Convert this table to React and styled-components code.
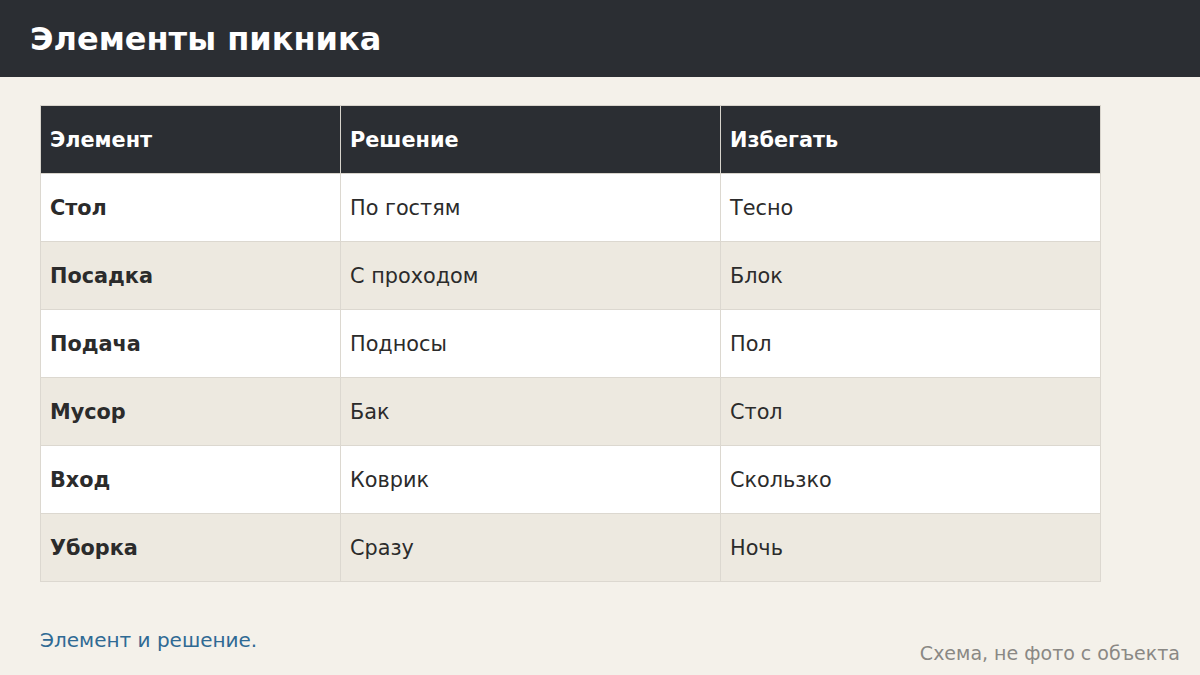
import React from "react";
import styled, { createGlobalStyle } from "styled-components";

const Global = createGlobalStyle`
  html, body { margin: 0; padding: 0; }
  body {
    background: #f4f1ea;
    font-family: "DejaVu Sans", "Liberation Sans", sans-serif;
    color: #2b2b2b;
  }
`;

const Page = styled.div`
  width: 1200px;
  height: 675px;
  display: flex;
  flex-direction: column;
  background: #f4f1ea;
  overflow: hidden;
`;

const TopBar = styled.header`
  height: 77px;
  flex: none;
  background: #2b2e33;
  display: flex;
  align-items: center;
  padding-left: 30px;
`;

const Title = styled.h1`
  margin: 0;
  color: #ffffff;
  font-size: 32px;
  font-weight: 700;
`;

const Main = styled.main`
  flex: 1;
  padding: 28px 40px 0 40px;
`;

const Table = styled.table`
  width: 1061px;
  border-collapse: collapse;
  table-layout: fixed;
`;

const HeadCell = styled.th`
  height: 67px;
  padding: 0 9px;
  background: #2b2e33;
  color: #ffffff;
  font-size: 20.8px;
  font-weight: 700;
  text-align: left;
  border: 1px solid #d8d4cc;
`;

const Row = styled.tr`
  background: ${(p) => (p.$alt ? "#ede9e0" : "#ffffff")};
`;

const Cell = styled.td`
  height: 67px;
  padding: 0 9px;
  font-size: 20.8px;
  font-weight: ${(p) => (p.$strong ? 700 : 400)};
  color: #2b2b2b;
  border: 1px solid #dcd8d0;
`;

const Footer = styled.footer`
  display: flex;
  justify-content: space-between;
  align-items: flex-end;
  padding: 0 20px 11px 40px;
`;

const Caption = styled.p`
  margin: 0 0 12px 0;
  color: #2f6a94;
  font-size: 20px;
`;

const Note = styled.span`
  color: #8a8884;
  font-size: 19px;
`;

const rows = [
  ["Стол", "По гостям", "Тесно"],
  ["Посадка", "С проходом", "Блок"],
  ["Подача", "Подносы", "Пол"],
  ["Мусор", "Бак", "Стол"],
  ["Вход", "Коврик", "Скользко"],
  ["Уборка", "Сразу", "Ночь"],
];

export default function App() {
  return (
    <Page>
      <Global />
      <TopBar>
        <Title>Элементы пикника</Title>
      </TopBar>
      <Main>
        <Table>
          <colgroup>
            <col style={{ width: "300px" }} />
            <col style={{ width: "380px" }} />
            <col style={{ width: "380px" }} />
          </colgroup>
          <thead>
            <tr>
              <HeadCell>Элемент</HeadCell>
              <HeadCell>Решение</HeadCell>
              <HeadCell>Избегать</HeadCell>
            </tr>
          </thead>
          <tbody>
            {rows.map((r, i) => (
              <Row key={i} $alt={i % 2 === 1}>
                <Cell $strong>{r[0]}</Cell>
                <Cell>{r[1]}</Cell>
                <Cell>{r[2]}</Cell>
              </Row>
            ))}
          </tbody>
        </Table>
      </Main>
      <Footer>
        <Caption>Элемент и решение.</Caption>
        <Note>Схема, не фото с объекта</Note>
      </Footer>
    </Page>
  );
}
